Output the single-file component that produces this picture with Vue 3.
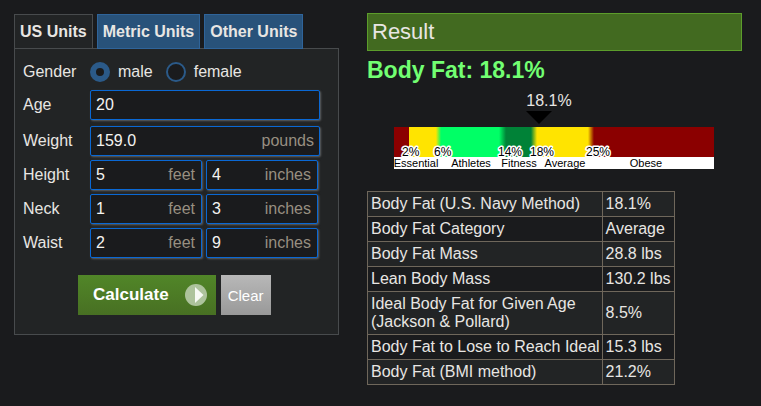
<script setup>
import { ref } from 'vue'

const tabs = ['US Units', 'Metric Units', 'Other Units']
const activeTab = ref(0)
const gender = ref('male')
const age = ref('20')
const weight = ref('159.0')
const lengths = ref([
  { label: 'Height', feet: '5', inches: '4' },
  { label: 'Neck', feet: '1', inches: '3' },
  { label: 'Waist', feet: '2', inches: '9' },
])

function clearForm() {
  age.value = ''
  weight.value = ''
  lengths.value.forEach((row) => {
    row.feet = ''
    row.inches = ''
  })
}

// The scale covers 0% to 40% body fat at 8 units per percent.
const perPercent = 8
const bodyFat = 18.1
const marker = Math.round(bodyFat * perPercent)
const ticks = [2, 6, 14, 18, 25]
const categories = [
  { name: 'Essential', center: 22 },
  { name: 'Athletes', center: 77 },
  { name: 'Fitness', center: 125 },
  { name: 'Average', center: 171 },
  { name: 'Obese', center: 252 },
]

const results = [
  ['Body Fat (U.S. Navy Method)', '18.1%'],
  ['Body Fat Category', 'Average'],
  ['Body Fat Mass', '28.8 lbs'],
  ['Lean Body Mass', '130.2 lbs'],
  ['Ideal Body Fat for Given Age\n(Jackson & Pollard)', '8.5%'],
  ['Body Fat to Lose to Reach Ideal', '15.3 lbs'],
  ['Body Fat (BMI method)', '21.2%'],
]
</script>

<template>
  <main class="page">
    <section class="calculator">
      <nav class="tabs">
        <a
          v-for="(tab, i) in tabs"
          :key="tab"
          href="#"
          class="tab"
          :class="{ active: i === activeTab }"
          @click.prevent="activeTab = i"
          >{{ tab }}</a
        >
      </nav>
      <form class="panel" @submit.prevent>
        <div class="row gender" role="radiogroup" aria-labelledby="gender-label">
          <span id="gender-label" class="label">Gender</span>
          <div class="radios">
            <label class="radio"><input v-model="gender" type="radio" name="gender" value="male" />male</label>
            <label class="radio"><input v-model="gender" type="radio" name="gender" value="female" />female</label>
          </div>
        </div>
        <div class="row age">
          <label class="label" for="age">Age</label>
          <div class="field"><input id="age" v-model="age" type="text" /></div>
        </div>
        <div class="row">
          <label class="label" for="weight">Weight</label>
          <div class="field">
            <input id="weight" v-model="weight" type="text" />
            <span class="unit">pounds</span>
          </div>
        </div>
        <div v-for="row in lengths" :key="row.label" class="row">
          <label class="label" :for="row.label + '-feet'">{{ row.label }}</label>
          <div class="pair">
            <div class="field">
              <input :id="row.label + '-feet'" v-model="row.feet" type="text" />
              <label class="unit" :for="row.label + '-feet'">feet</label>
            </div>
            <div class="field">
              <input :id="row.label + '-inches'" v-model="row.inches" type="text" />
              <label class="unit" :for="row.label + '-inches'">inches</label>
            </div>
          </div>
        </div>
        <div class="actions">
          <button class="calculate" type="submit">
            Calculate
            <svg width="22" height="22" viewBox="0 0 22 22" aria-hidden="true">
              <circle cx="11" cy="11" r="11" fill="#adc39c" />
              <path d="M10 3 L18.5 11 L10 19 Z" fill="#f6f9f4" />
            </svg>
          </button>
          <button class="clear" type="button" @click="clearForm">Clear</button>
        </div>
      </form>
    </section>

    <section class="result">
      <h2 class="title">Result</h2>
      <p class="headline">Body Fat: 18.1%</p>
      <svg class="chart" width="320" height="79" viewBox="0 0 320 79">
        <defs>
          <linearGradient id="scale" x1="0" x2="320" y1="0" y2="0" gradientUnits="userSpaceOnUse">
            <stop offset="0.047" stop-color="#8b0000" />
            <stop offset="0.047" stop-color="#ffe400" />
            <stop offset="0.131" stop-color="#ffe400" />
            <stop offset="0.147" stop-color="#00ff66" />
            <stop offset="0.328" stop-color="#00ff66" />
            <stop offset="0.35" stop-color="#008237" />
            <stop offset="0.428" stop-color="#008237" />
            <stop offset="0.447" stop-color="#ffe400" />
            <stop offset="0.606" stop-color="#ffe400" />
            <stop offset="0.625" stop-color="#8b0000" />
          </linearGradient>
        </defs>
        <text class="value" :x="marker + 10" y="16" text-anchor="middle">18.1%</text>
        <path :d="`M${marker - 13} 21 h26 l-13 13 z`" fill="#000" />
        <rect y="37" width="320" height="30" fill="url(#scale)" />
        <text v-for="t in ticks" :key="t" class="tick" :x="t * perPercent - 8" y="66">{{ t }}%</text>
        <rect y="67" width="320" height="12" fill="#fff" />
        <text v-for="c in categories" :key="c.name" class="category" :x="c.center" y="77" text-anchor="middle">
          {{ c.name }}
        </text>
      </svg>
      <table class="results">
        <tbody>
          <tr v-for="[name, value] in results" :key="name">
            <td>{{ name }}</td>
            <td>{{ value }}</td>
          </tr>
        </tbody>
      </table>
    </section>
  </main>
</template>

<style>
body {
  background: #1a1b1d;
}
</style>

<style scoped>
.page {
  display: grid;
  grid-template-columns: minmax(0, 13fr) minmax(0, 15fr);
  align-items: start;
  gap: 28px;
  padding: 13px 19px 20px 14px;
  color: #e8e6e3;
  font: 16px/18px "Liberation Sans", Arial, sans-serif;
}

.tabs {
  display: flex;
  gap: 4px;
  padding-top: 1px;
}

.tab {
  box-sizing: border-box;
  height: 35px;
  margin-bottom: -1px;
  padding: 8px 5px;
  border: 1px solid #2f649a;
  background: #28527a;
  color: #e8e6e3;
  font-weight: bold;
  text-decoration: none;
  white-space: nowrap;
}

.tab.active {
  border-color: #484b4d;
  background: #222425;
}

.panel {
  padding: 13px 18px 19px 8px;
  border: 1px solid #484b4d;
  background: #222425;
}

.row {
  display: grid;
  grid-template-columns: 67px minmax(0, 1fr);
  align-items: center;
  margin-bottom: 4px;
}

.row.gender {
  margin-bottom: 8px;
}

.row.age {
  margin-bottom: 6px;
}

.radios {
  display: flex;
  gap: 13px;
}

.radio {
  display: flex;
  align-items: center;
  gap: 8px;
}

.radio input {
  box-sizing: border-box;
  width: 20px;
  height: 20px;
  margin: 0;
  border: 2px solid #2b5a89;
  border-radius: 50%;
  background: #1a1b1d;
  appearance: none;
}

.radio input:checked {
  border-width: 6px;
}

.pair {
  display: grid;
  grid-template-columns: 1fr 1fr;
  gap: 4px;
  padding-right: 2px;
}

.field {
  display: flex;
  align-items: center;
  box-sizing: border-box;
  height: 30px;
  padding: 0 5px;
  border: 1px solid #0a68d4;
  border-radius: 2px;
  background: #1a1b1d;
  box-shadow: 1px 1px 2px #5c6062;
}

.pair .field {
  padding-right: 6px;
}

.field input {
  flex: 1;
  width: 0;
  min-width: 0;
  padding: 0;
  border: 0;
  outline: 0;
  background: none;
  color: #f4f3f1;
  font: inherit;
}

.unit {
  color: #988f81;
}

.actions {
  display: flex;
  gap: 5px;
  padding: 13px 0 0 55px;
}

.actions button {
  height: 40px;
  border: 0;
  border-radius: 0;
  color: #fff;
  font-family: inherit;
}

.calculate {
  display: flex;
  align-items: center;
  gap: 16px;
  padding: 0 9px 0 15px;
  background: linear-gradient(#518628, #487023);
  font-size: 17px;
  font-weight: bold;
}

.clear {
  min-width: 50px;
  padding: 0 6px;
  background: linear-gradient(#b8b8b8, #999);
  font-size: 15px;
}

.title {
  margin: 0;
  padding: 6px 4px;
  border: 1px solid #5c9d2b;
  background: #426a20;
  font-size: 22px;
  font-weight: normal;
  line-height: 24px;
}

.headline {
  margin: 6px 0 7px;
  color: #72ff72;
  font-size: 23px;
  font-weight: bold;
  line-height: 26px;
}

.chart {
  display: block;
  margin: 0 0 22px 27px;
}

.value {
  fill: #e8e6e3;
  font-size: 16px;
}

.tick {
  fill: #000;
  stroke: #fff;
  stroke-width: 3px;
  stroke-linejoin: round;
  paint-order: stroke;
  font-size: 12px;
}

.category {
  fill: #000;
  font-size: 11px;
}

.results {
  border-collapse: collapse;
}

.results td {
  padding: 3px;
  border: 1px solid #6f675b;
  white-space: pre;
}

.results td:first-child {
  padding-right: 2px;
}

.results tr:nth-child(odd) {
  background: #222425;
}
</style>
